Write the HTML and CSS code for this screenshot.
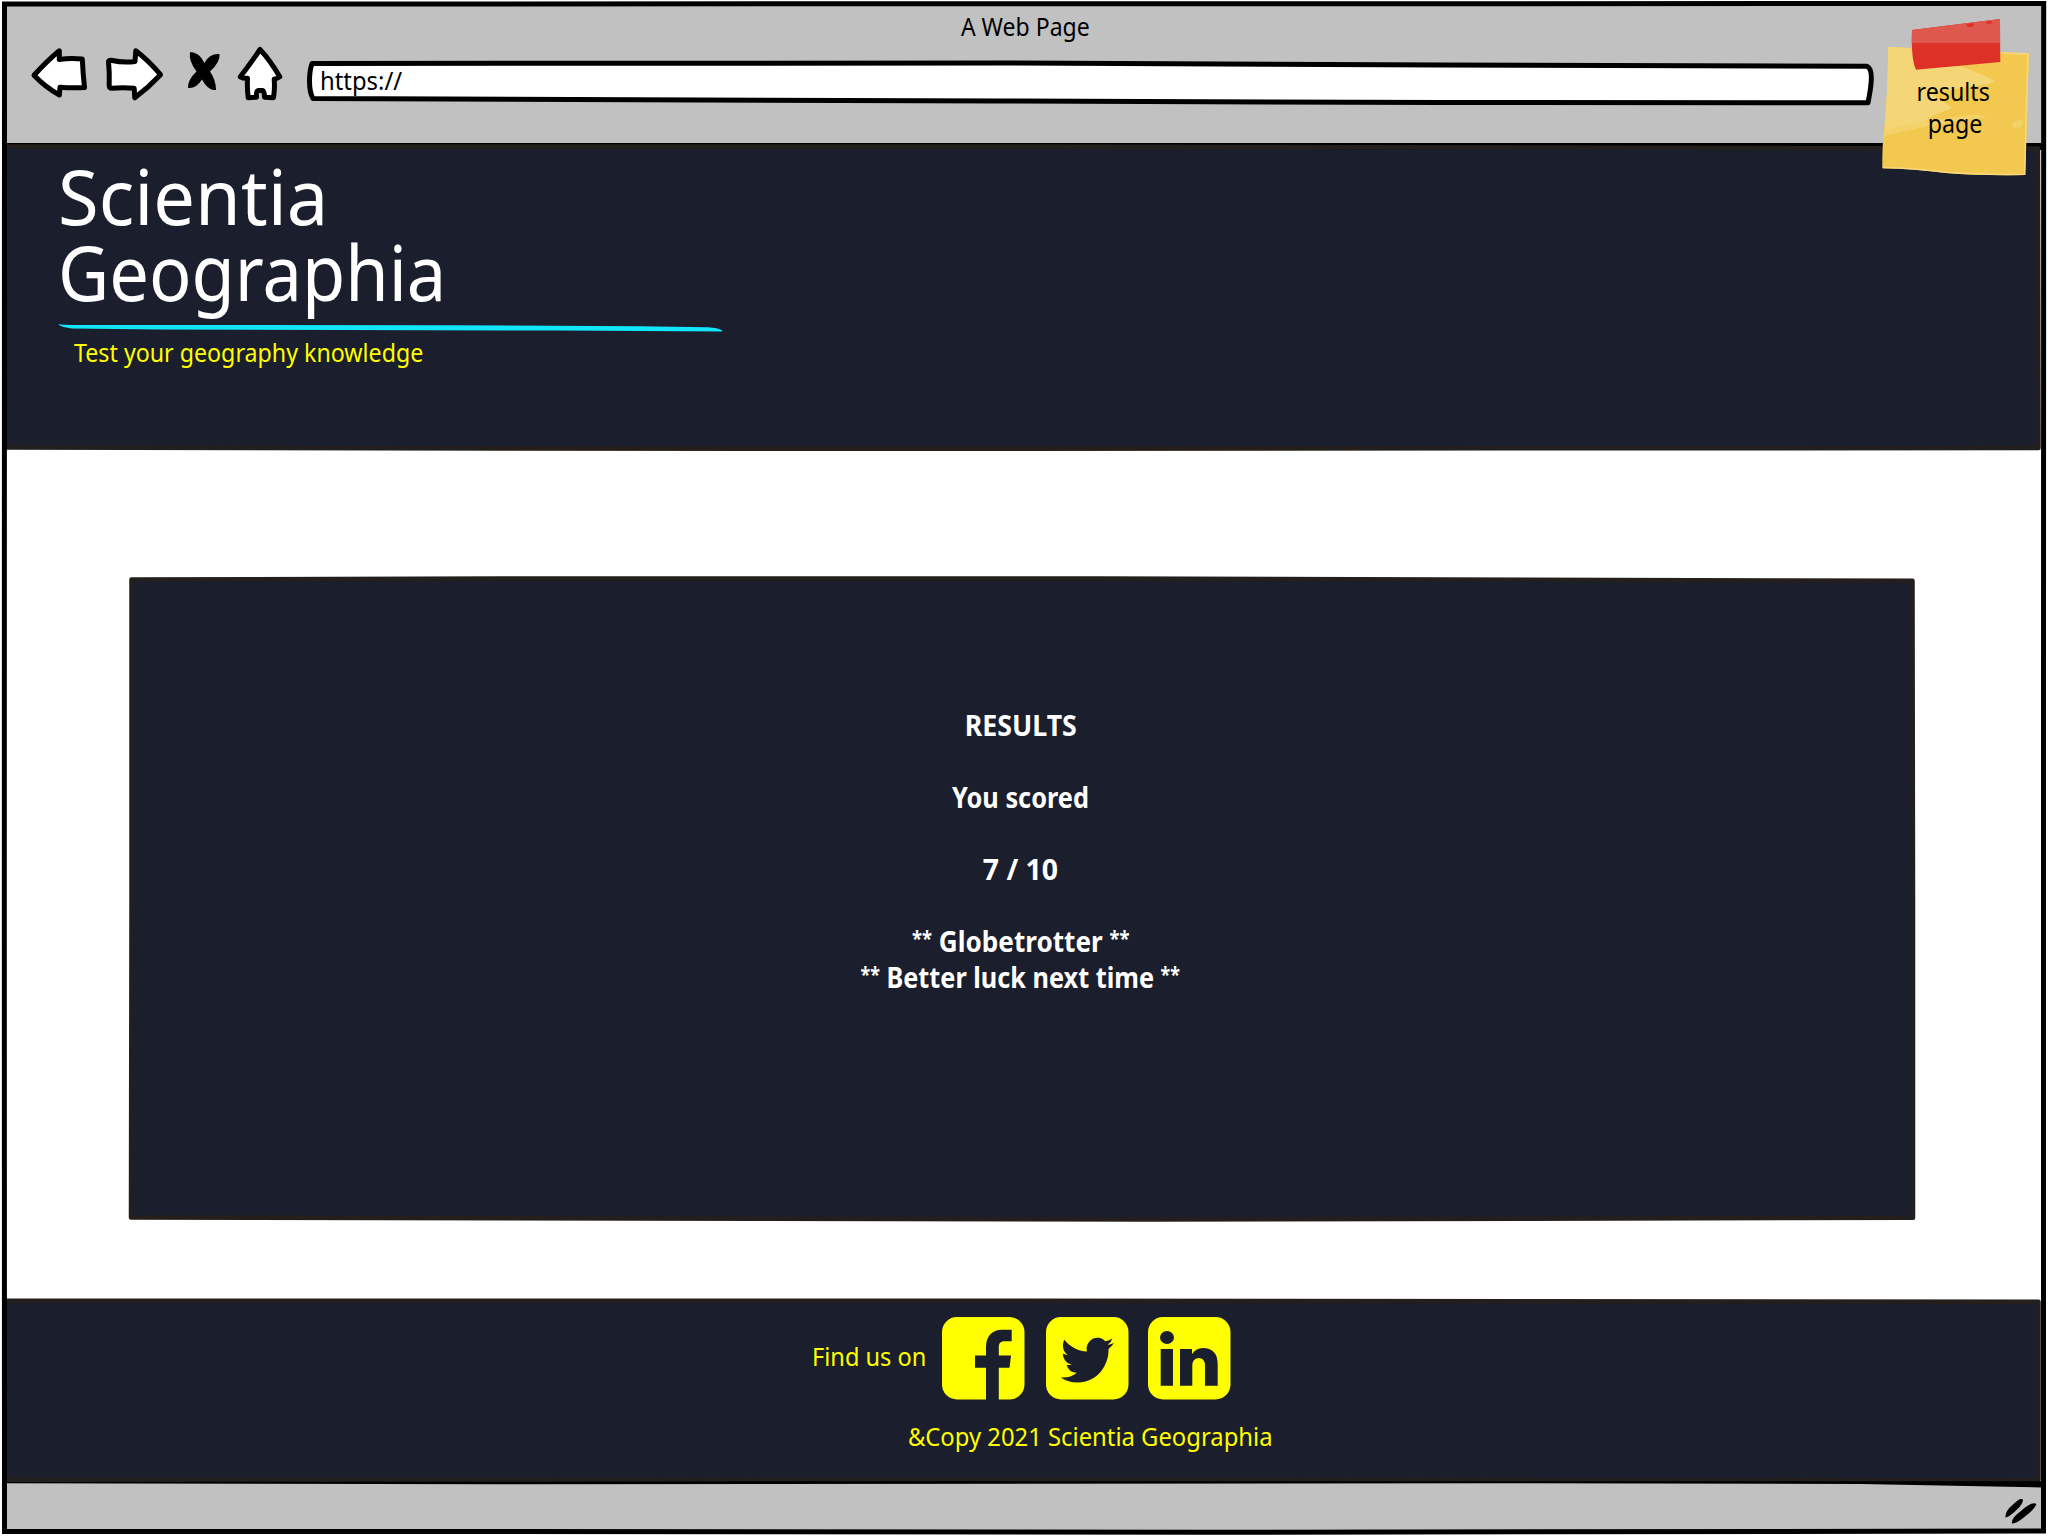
FILE: index.html
```html
<!DOCTYPE html>
<html lang="en">
<head>
<meta charset="utf-8">
<title>A Web Page</title>
<link rel="stylesheet" href="styles.css">
</head>
<body>
<div class="window">
  <header class="chrome">
    <div class="window-title"><span class="fit fit-title">A Web Page</span></div>
    <div class="toolbar">
      <svg class="icon" width="67" height="60" viewBox="30 46 67 60"><path d="M34 75.3Q48 60 59.3 50.8L59.3 59.5Q70 57.8 82.3 59Q83 74 84.5 87.5Q72 88.3 60 87.2L59.4 95Q45 87 34 75.3Z"/></svg>
      <svg class="icon" width="77" height="60" viewBox="97 46 77 60"><path d="M108.5 61.8Q108.5 60 111 60.2Q123 63 135 61.5L135.8 50.8Q149 61 160.5 74.7Q149 87 134.8 97.8L134.2 88.3Q123 87 111.5 88.3Q109.5 88.3 109.2 86Q109.7 73 108.5 61.8Z"/></svg>
      <svg class="icon-solid" width="55" height="60" viewBox="174 46 55 60"><path d="M190 52Q199 52 204.5 63Q209 53.5 219.5 54Q220.5 62 210 71.5Q216 80 216 90Q208 91 202 79.5Q196 89 188 88Q187.5 80 196.5 71.5Q188.5 61 190 52Z"/></svg>
      <svg class="icon" width="77" height="60" viewBox="229 46 77 60"><path d="M260 49.5Q253 60 240.3 76.8Q243 78.5 247.5 78.3Q247 88 248.2 97.7L256.5 97.2Q256 91 258 90.6L263 90.6Q264.3 91 264.5 97.2L273.5 97.7Q275 88 274.2 79.2Q278 78.5 279.8 76.8Q270 60 260 49.5Z"/></svg>
      <div class="address">
        <svg class="backdrop" viewBox="306 46 1570 60"><path class="field" d="M312 63.5L1000 63L1440 65L1867 66.3C1874 69 1871 88 1868 102.7L1440 102.5L1000 101L313 98.5C308 90 309 72 312 63.5Z"/></svg>
        <span class="fit fit-url">https://</span>
      </div>
    </div>
  </header>

  <section class="banner">
    <svg class="backdrop" viewBox="0 144 2048 307">
      <path d="M4 143H2042V150H4Z"/>
      <path class="panel" d="M6 146.5L1000 146.5L2038 148.5L2038.5 448L1500 448.3L1000 448.8L500 448.5L5 447.5Z"/>
    </svg>
    <h1 class="brand"><span class="fit fit-b1">Scientia</span><span class="fit fit-b2">Geographia</span></h1>
    <svg class="rule" width="666" height="12" viewBox="58 322 666 12"><path d="M58 324.3Q64 325 72 325L450 325.2L640 326.3L708 327.3Q718 328 722 330.3V331.5L560 330.6L160 329.6L72 328.6Q62 327.5 58 324.3Z"/></svg>
    <p class="tagline"><span class="fit fit-tag">Test your geography knowledge</span></p>
  </section>

  <main class="content">
    <section class="results">
      <svg class="backdrop" viewBox="126 574 1792 650"><path class="panel" d="M131.5 579.5L500 578.5L1100 578.5L1912.5 580.8L1913 900L1913 1217.8Q1500 1218.3 1150 1219.5Q600 1219 131 1217.5L131.5 900Z"/></svg>
      <p><span class="fit fit-r1">RESULTS</span></p>
      <p><span class="fit fit-r2">You scored</span></p>
      <p><span class="fit fit-r3">7 / 10</span></p>
      <p class="rank"><span class="fit fit-r4"><span class="stars">**</span> Globetrotter <span class="stars">**</span></span></p>
      <p><span class="fit fit-r5"><span class="stars">**</span> Better luck next time <span class="stars">**</span></span></p>
    </section>
  </main>

  <footer class="footer">
    <svg class="backdrop" viewBox="0 1298 2048 185"><path class="panel" d="M5.5 1300.8L1000 1300.8L2038.5 1301.8L2038.5 1480.2L5.5 1479.3Z"/></svg>
    <div class="social">
      <span class="find"><span class="fit fit-find">Find us on</span></span>
      <svg class="badge" viewBox="0 0 82.5 82.5"><rect width="82.5" height="82.5" rx="15"/><path d="M44 83V50.7H33V38.5H44V30C44 18.5 51 12.7 60 12.7H69.7V24.3H62.5C58.5 24.3 56.8 26.5 56.8 30V38.5H69L67.5 50.7H56.8V83Z"/></svg>
      <svg class="badge" viewBox="0 0 82.5 82.5"><rect width="82.5" height="82.5" rx="15"/><path transform="translate(14.7 15.5) scale(2.22 2.3)" d="M23.953 4.57a10 10 0 01-2.825.775 4.958 4.958 0 002.163-2.723c-.951.555-2.005.959-3.127 1.184a4.92 4.92 0 00-8.384 4.482C7.69 8.095 4.067 6.13 1.64 3.162a4.822 4.822 0 00-.666 2.475c0 1.71.87 3.213 2.188 4.096a4.904 4.904 0 01-2.228-.616v.06a4.923 4.923 0 003.946 4.827 4.996 4.996 0 01-2.212.085 4.936 4.936 0 004.604 3.417 9.867 9.867 0 01-6.102 2.105c-.39 0-.779-.023-1.17-.067a13.995 13.995 0 007.557 2.209c9.053 0 13.998-7.496 13.998-13.985 0-.21 0-.42-.015-.63A9.935 9.935 0 0024 4.59z"/></svg>
      <svg class="badge" viewBox="0 0 82.5 82.5"><rect width="82.5" height="82.5" rx="15"/><ellipse cx="19" cy="20.5" rx="7" ry="6.5"/><path d="M12.7 32H25V68.7H12.7ZM32 32H44V37Q48 31 55 31C64 31 69.7 36 69.7 47V68.7H57V49Q57 41 50.5 41Q44.3 41.5 44.3 49V68.7H32Z"/></svg>
    </div>
    <p class="copy"><span class="fit fit-copy">&amp;Copy 2021 Scientia Geographia</span></p>
  </footer>

  <div class="status">
    <svg class="backdrop" viewBox="4 1483 2040 50"><path d="M4 1481.3H2042V1487.5L1860 1484L1500 1483.2L500 1484.3L4 1483.3Z"/><path d="M2005.5 1517.5Q2005 1511 2013 1504.5Q2020 1497 2023 1499.5Q2023 1504 2017 1509.5Q2010 1516.5 2005.5 1517.5ZM2012 1523.5Q2011 1518 2021 1511Q2032 1501 2036.5 1504Q2034 1510 2025 1516.5Q2016 1524 2012 1523.5Z"/></svg>
  </div>

  <svg class="frame" viewBox="0 0 2048 1536"><path d="M4.5 4Q1000 3.3 2043.7 3.5Q2043 400 2043.5 700T2043.5 1531Q1700 1532 1200 1532.3T500 1531.5T4.5 1531.5Q5.5 1300 4.3 900T4.5 4Z"/></svg>

  <aside class="note">
    <svg class="backdrop" viewBox="1880 16 152 162">
      <path fill="#f2c94e" d="M1888.3 47L2029 53.3Q2027 110 2025.3 175Q1980 176 1946 173Q1915 169 1882.3 168.3Q1882 145 1884.5 125Q1888 90 1888.3 47Z"/>
      <path fill="#f5d677" d="M1888.3 47L1912 48L1918 68L1960 66Q1985 75 1996 82Q1970 88 1930 92L1952 108Q1925 118 1925 122Q1900 126 1884.3 133Q1888 90 1888.3 47Z"/>
      <path fill="#f4d26a" d="M1884 130Q1910 123 1950 118Q1976 112 1987 117Q1940 122 1884 136ZM2011 127Q2014 120 2022 119Q2024 126 2019 128Z"/>
      <path fill="none" stroke="#f6d97f" stroke-width="1.5" d="M2028 53.3Q2026.5 110 2024.6 174.3Q1980 175 1946 172.3Q1915 168.3 1883 167.6M2000 53L2028 54"/>
      <path fill="#dd3128" d="M1912 30L2000 19L2000.3 62L1916 69.7Q1911 60 1912 30Z"/>
      <path fill="#df584e" d="M1912 30L2000 19V43H1911.7Z"/>
      <path fill="#dd3128" d="M1967 24L1974 23Q1974 27 1970 27T1967 24ZM1986 21.5L1992 21Q1992 24 1989 24T1986 21.5Z"/>
    </svg>
    <span class="fit fit-n1">results</span>
    <span class="fit fit-n2">page</span>
  </aside>
</div>
</body>
</html>
```
FILE: styles.css
```css
* { box-sizing: border-box; }
body { margin: 0; background: #fff; font-family: "Noto Sans", sans-serif; }
h1, p { margin: 0; font-weight: 400; }
svg { display: block; overflow: visible; }

.window {
  position: relative;
  display: flex;
  flex-direction: column;
  width: 2048px;
  height: 1536px;
  overflow: hidden;
  font-size: 25.5px;
  line-height: 32px;
}
.backdrop { position: absolute; inset: 0; width: 100%; height: 100%; }
.panel { fill: #1b1e2c; stroke: #231f1c; stroke-width: 4.5; stroke-linejoin: round; }

/* Narrowed lettering: each label sets its own horizontal scale */
.fit { display: inline-block; white-space: nowrap; transform: scaleX(.91); transform-origin: 50% 50%; }
.fit-url, .fit-b1, .fit-b2, .fit-tag, .fit-find { transform-origin: 0 50%; }
.fit-title { transform: scaleX(.903); }
.fit-url { transform: scaleX(.935); }
.fit-b1 { transform: scaleX(.962); }
.fit-b2 { transform: scaleX(.914); }
.fit-r1 { transform: scaleX(.923); }
.fit-r2 { transform: scaleX(.873); }
.fit-r3 { transform: scaleX(.98); }
.fit-r4 { transform: scaleX(.9); }
.fit-r5 { transform: scaleX(.872); }
.fit-find { transform: scaleX(.925); }
.fit-copy { transform: scaleX(.934); }

/* Browser chrome */
.chrome { height: 140px; margin: 4px 4px 0; padding: 6px 0 0 26px; background: #c1c1c1; }
.window-title { height: 36px; padding-right: 24px; text-align: center; }
.toolbar { display: flex; }
.icon path, .field { fill: #fff; stroke: #000; stroke-width: 5; stroke-linejoin: round; }
.address { position: relative; width: 1570px; height: 60px; padding: 18px 0 0 13.5px; }
.address .fit { position: relative; }

/* Site banner */
.banner { position: relative; height: 307px; padding: 14.3px 0 0 58px; }
.banner > * { position: relative; }
.banner > .backdrop { position: absolute; }
.brand { display: flex; flex-direction: column; align-items: flex-start; color: #fff; font-size: 77px; line-height: 76px; }
.rule { margin-top: 11.7px; fill: #12e6fa; }
.tagline { padding: 2px 0 0 16px; color: #ff0; }

/* Results */
.content { height: 847px; padding: 123px 130px 0 126px; }
.results { position: relative; height: 650px; padding: 132.5px 3px 0 0; color: #fff; font-size: 29px; line-height: 36px; text-align: center; }
.results p { position: relative; height: 36px; margin-bottom: 36px; font-weight: 700; }
.results .rank { margin-bottom: 0; }
.stars { position: relative; top: -5.5px; font-size: 20.5px; line-height: 1; }

/* Footer */
.footer { position: relative; height: 185px; padding-top: 19.3px; color: #ff0; }
.social { position: relative; display: flex; padding-left: 812px; }
.find { width: 130px; padding-top: 23px; }
.badge { width: 82.5px; height: 82.5px; margin-right: 21.5px; fill: #ff0; }
.badge + .badge { margin-right: 19.5px; }
.badge path, .badge ellipse { fill: #1b1e2c; }
.copy { position: relative; padding: 20.5px 0 0 133px; text-align: center; }

.status { position: relative; height: 50px; margin: 0 4px; background: #c1c1c1; }
.frame { position: absolute; inset: 0; pointer-events: none; fill: none; stroke: #000; stroke-width: 5; }

/* Sticky note pinned over the window corner */
.note { position: absolute; left: 1880px; top: 16px; width: 152px; height: 162px; display: flex; flex-direction: column; align-items: center; padding: 58.5px 6px 0 0; }
.note .fit { position: relative; }
.fit-n2 { margin-left: 5px; }
```
